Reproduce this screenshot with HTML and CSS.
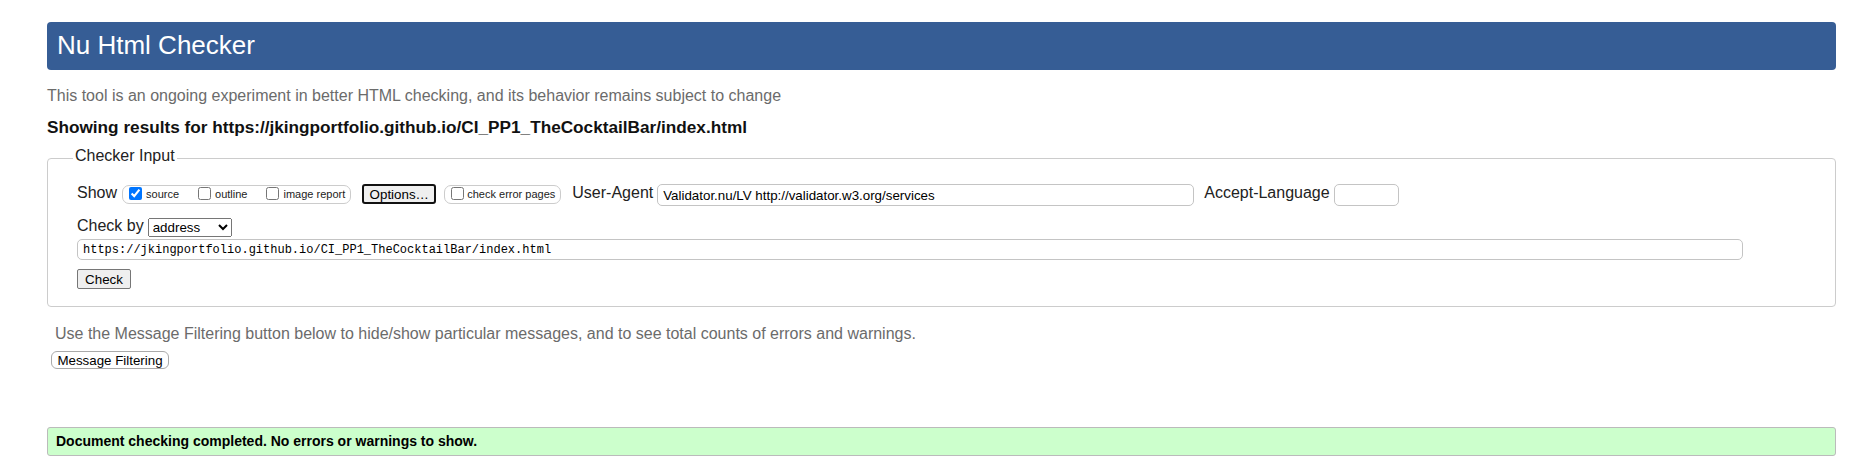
FILE: index.html
```html
<!DOCTYPE html>
<html lang="en">
<head>
<meta charset="utf-8">
<title>Nu Html Checker</title>
<link rel="stylesheet" href="styles.css">
</head>
<body>
<h1 class="site-title">Nu Html Checker</h1>
<p class="intro">This tool is an ongoing experiment in better HTML checking, and its behavior remains subject to change</p>
<p class="showing">Showing results for https://jkingportfolio.github.io/CI_PP1_TheCocktailBar/index.html</p>
<form class="checker-form">
<fieldset class="checker-input">
<legend class="legend">Checker Input</legend>
<div class="row row-show">
  <span class="label">Show</span>
  <span class="opt-group">
    <label class="opt"><input type="checkbox" checked><span>source</span></label>
    <label class="opt"><input type="checkbox"><span>outline</span></label>
    <label class="opt"><input type="checkbox"><span>image report</span></label>
  </span>
  <button type="button" class="btn-options">Options…</button>
  <span class="opt-group opt-group-single">
    <label class="opt"><input type="checkbox"><span>check error pages</span></label>
  </span>
  <span class="label label-ua">User-Agent</span>
  <input class="text-input ua-input" type="text" value="Validator.nu/LV http://validator.w3.org/services">
  <span class="label label-al">Accept-Language</span>
  <input class="text-input al-input" type="text" value="">
</div>
<div class="row row-checkby">
  <span class="label label-checkby">Check by</span>
  <select class="select"><option>address</option></select>
</div>
<div class="row row-url">
  <input class="url-input" type="text" value="https://jkingportfolio.github.io/CI_PP1_TheCocktailBar/index.html">
</div>
<div class="row row-submit">
  <button type="button" class="btn-check">Check</button>
</div>
</fieldset>
</form>
<p class="filter-note">Use the Message Filtering button below to hide/show particular messages, and to see total counts of errors and warnings.</p>
<button type="button" class="btn-filter">Message Filtering</button>
<div class="success">Document checking completed. No errors or warnings to show.</div>
</body>
</html>
```

FILE: styles.css
```css
* { box-sizing: border-box; }

body {
  margin: 0;
  padding: 22px 20px 0 47px;
  font-family: "Liberation Sans", Arial, sans-serif;
  color: #222;
  background: #fff;
}

.site-title {
  margin: 0;
  height: 48px;
  padding: 0 10px 2px;
  background: #365d95;
  color: #fff;
  border-radius: 4px;
  font-size: 26px;
  font-weight: normal;
  line-height: 46px;
}

.intro {
  margin: 17px 0 0;
  font-size: 16px;
  line-height: 18px;
  color: #6b6b6b;
}

.showing {
  margin: 12px 0 0;
  font-size: 17.2px;
  line-height: 20px;
  font-weight: bold;
  color: #111;
}

.checker-form { margin: 0; }

.checker-input {
  margin: 10px 0 0;
  padding: 14px 29px 17px;
  border: 1px solid #ccc;
  border-radius: 4px;
  min-width: 0;
}

.legend {
  margin-left: -4px;
  padding: 0 2px 5px;
  font-size: 16px;
  line-height: 18px;
  color: #222;
}

.row { display: flex; align-items: flex-start; }

.row-show { height: 22px; }

.label {
  font-size: 16px;
  line-height: 18px;
  white-space: nowrap;
  color: #222;
}

.opt-group {
  display: inline-flex;
  align-items: center;
  height: 19px;
  margin: 1px 0 0 5px;
  padding: 0 5px 0 6px;
  border: 1px solid #ccc;
  border-radius: 7px;
}

.opt {
  display: inline-flex;
  align-items: center;
  font-size: 11px;
  line-height: 17px;
  color: #222;
  white-space: nowrap;
}

.opt + .opt { margin-left: 19px; }

.opt input {
  margin: 0 4px 2px 0;
  width: 13px;
  height: 13px;
}

.opt-group-single { margin-left: 8px; }
.opt-group-single .opt input { margin-right: 3px; }

.btn-options {
  margin-left: 11px;
  width: 74px;
  height: 20px;
  padding: 0;
  border: 2px solid #111;
  border-radius: 3px;
  background: #efefef;
  font: 13.33px "Liberation Sans", Arial, sans-serif;
  color: #000;
}

.label-ua { margin-left: 11px; }
.label-al { margin-left: 10px; }

.text-input {
  height: 22px;
  margin-left: 4px;
  padding: 0 5px;
  border: 1px solid #c4c4c4;
  border-radius: 5px;
  font: 13.33px "Liberation Sans", Arial, sans-serif;
  color: #000;
  background: #fff;
}

.ua-input { width: 537px; }
.al-input { width: 65px; }

.row-checkby { margin-top: 12px; height: 19px; }

.label-checkby { margin-top: -1px; }

.select {
  width: 84px;
  height: 19px;
  margin-left: 4px;
  font: 13.33px "Liberation Sans", Arial, sans-serif;
  color: #000;
}

.row-url { margin-top: 2px; }

.url-input {
  width: 1666px;
  height: 21px;
  padding: 0 5px;
  border: 1px solid #c4c4c4;
  border-radius: 5px;
  font: 12px "Liberation Mono", "DejaVu Sans Mono", monospace;
  color: #000;
  background: #fff;
}

.row-submit { margin-top: 9px; }

.btn-check {
  width: 54px;
  height: 20px;
  padding: 0;
  border: 1px solid #767676;
  border-radius: 2px;
  background: #efefef;
  font: 13.33px "Liberation Sans", Arial, sans-serif;
  color: #000;
}

.filter-note {
  margin: 18px 0 0 8px;
  font-size: 16px;
  line-height: 18px;
  color: #6b6b6b;
}

.btn-filter {
  display: block;
  margin: 8px 0 0 4px;
  width: 118px;
  height: 18px;
  padding: 0;
  border: 1px solid #aaa;
  border-radius: 6px;
  background: #fff;
  font: 13.33px "Liberation Sans", Arial, sans-serif;
  color: #000;
}

.success {
  margin-top: 58px;
  height: 29px;
  padding: 0 8px;
  border: 1px solid #bbb;
  border-radius: 3px;
  background: #ccffcc;
  font-size: 14px;
  font-weight: bold;
  line-height: 27px;
  color: #000;
}
```
